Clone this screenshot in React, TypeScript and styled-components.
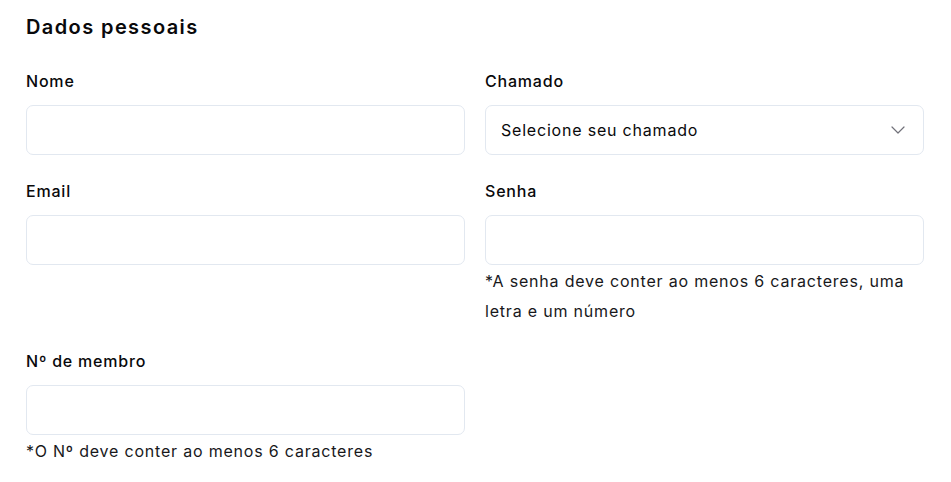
import React from "react";
import styled, { createGlobalStyle } from "styled-components";

const Global = createGlobalStyle`
  html, body { margin: 0; padding: 0; background: #ffffff; }
  body {
    font-family: Inter, "Noto Sans", sans-serif;
    letter-spacing: 0.05em;
    color: #09090b;
    -webkit-font-smoothing: antialiased;
  }
  * { box-sizing: border-box; }
`;

const Page = styled.form`
  padding: 13px 27px 0 26px;
  width: 951px;
`;

const Title = styled.h2`
  margin: 0 0 28px;
  font-size: 20px;
  line-height: 28px;
  font-weight: 600;
  letter-spacing: 0.07em;
`;

const Grid = styled.div`
  display: grid;
  grid-template-columns: 1fr 1fr;
  column-gap: 20px;
  row-gap: 24px;
  align-items: start;
`;

const Field = styled.div`
  display: flex;
  flex-direction: column;
`;

const Label = styled.label`
  font-size: 16px;
  line-height: 24px;
  font-weight: 500;
  margin-bottom: 12px;
`;

const Input = styled.input`
  height: 50px;
  width: 100%;
  border: 1px solid #e2e8f0;
  border-radius: 7px;
  padding: 0 16px;
  font: inherit;
  font-size: 16px;
  background: #fff;
  outline: none;
`;

const Select = styled.button`
  height: 50px;
  width: 100%;
  border: 1px solid #e2e8f0;
  border-radius: 7px;
  padding: 0 13px 0 15px;
  background: #fff;
  display: flex;
  align-items: center;
  justify-content: space-between;
  font-family: inherit;
  letter-spacing: inherit;
  font-size: 16px;
  color: #09090b;
  cursor: pointer;
`;

const Chevron = styled.svg`
  width: 24px;
  height: 24px;
  color: #71717a;
`;

const Hint = styled.p`
  margin: 1px 0 -1px;
  font-size: 16px;
  line-height: 30px;
  color: #18181b;
`;

export default function App() {
  return (
    <>
      <Global />
      <Page onSubmit={(e) => e.preventDefault()}>
        <Title>Dados pessoais</Title>
        <Grid>
          <Field>
            <Label>Nome</Label>
            <Input type="text" />
          </Field>
          <Field>
            <Label>Chamado</Label>
            <Select type="button">
              <span>Selecione seu chamado</span>
              <Chevron viewBox="0 0 24 24" fill="none" stroke="currentColor" strokeWidth="1.2" strokeLinecap="round" strokeLinejoin="round">
                <path d="m6 9 6 6 6-6" />
              </Chevron>
            </Select>
          </Field>
          <Field>
            <Label>Email</Label>
            <Input type="email" />
          </Field>
          <Field>
            <Label>Senha</Label>
            <Input type="password" />
            <Hint>*A senha deve conter ao menos 6 caracteres, uma letra e um número</Hint>
          </Field>
          <Field>
            <Label>Nº de membro</Label>
            <Input type="text" />
            <Hint>*O Nº deve conter ao menos 6 caracteres</Hint>
          </Field>
        </Grid>
      </Page>
    </>
  );
}
